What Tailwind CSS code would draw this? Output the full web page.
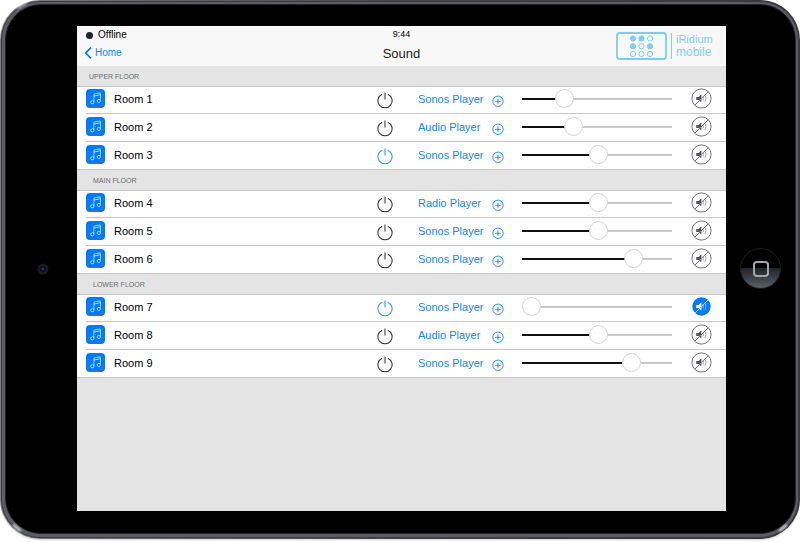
<!DOCTYPE html>
<html lang="en">
  <head>
    <meta charset="UTF-8" />
    <meta name="viewport" content="width=device-width, initial-scale=1.0" />
    <title>Sound</title>
    <script src="https://cdn.jsdelivr.net/npm/@tailwindcss/browser@4"></script>
  </head>
  <body
    class="min-h-screen flex flex-col bg-white pb-[3px] font-['Liberation_Sans',Arial,sans-serif] text-[11px] leading-4 text-black"
  >
    <!-- Tablet body -->
    <div
      class="relative flex-1 flex rounded-[40px] bg-linear-to-r from-[#7b7c81] via-[#48474c] to-[#38373b] p-px shadow-[0_1px_2px_#0003]"
    >
      <div
        class="flex-1 flex rounded-[39px] bg-[#5c5d62] border border-[#3a3a3f] pl-[3px] pr-0.5 pt-0.5 pb-[3px]"
      >
        <div
          class="flex-1 flex rounded-[36px] bg-black border border-[#222226] pt-[21px] pb-[22px]"
        >
          <!-- Camera -->
          <div class="w-[71px] flex items-center pl-[31px]">
            <svg class="size-[12px]" viewBox="0 0 12 12">
              <circle cx="6" cy="6" r="5.5" fill="#191b1e" />
              <circle cx="6" cy="6" r="3" fill="#0b0d1c" />
              <circle cx="6" cy="6" r="1.4" fill="#16307c" />
            </svg>
          </div>

          <main class="flex-1 flex flex-col bg-[#e4e4e4]">
            <header class="h-10 grid grid-cols-3 bg-[#f8f8f8]">
              <div class="pl-[9px] pt-px">
                <div class="h-4 flex items-center gap-[5px] text-[10px]">
                  <span class="size-[7px] rounded-full bg-[#1f2430]"></span>
                  Offline
                </div>
                <a
                  href="#"
                  class="h-5 -ml-0.5 flex items-center gap-[3px] text-[10px] text-[#1585fb]"
                >
                  <svg
                    class="w-2 h-3"
                    viewBox="0 0 8 12"
                    fill="none"
                    stroke="#007aff"
                    stroke-width="1.7"
                  >
                    <path d="M7 .7 1.7 6 7 11.3" />
                  </svg>
                  Home
                </a>
              </div>
              <div class="text-center">
                <div class="h-4 text-[9px]">9:44</div>
                <h1 class="text-[13px] leading-6 text-[#222]">Sound</h1>
              </div>
              <!-- Logo -->
              <div
                class="flex items-center justify-end gap-1 pr-2.5 text-[#7fcdee]"
              >
                <svg
                  class="w-[51px] h-7"
                  viewBox="0 0 51 28"
                  fill="none"
                  stroke="currentColor"
                >
                  <rect
                    x="1"
                    y="1"
                    width="49"
                    height="26"
                    rx="2.5"
                    stroke-width="1.8"
                  />
                  <g fill="currentColor">
                    <circle cx="17" cy="6.5" r="2.6" />
                    <circle cx="25.5" cy="6.5" r="2.6" />
                    <circle cx="17" cy="14.3" r="2.6" />
                    <circle cx="34" cy="14.3" r="2.6" />
                  </g>
                  <circle cx="34" cy="6.5" r="2.6" />
                  <circle cx="25.5" cy="14.3" r="2.6" />
                  <circle cx="17" cy="22" r="2.6" />
                  <circle cx="25.5" cy="22" r="2.6" />
                  <circle cx="34" cy="22" r="2.6" />
                </svg>
                <div
                  class="w-[45px] border-l border-current pl-1 leading-[13px]"
                >
                  <div class="text-[11px]">iRidium</div>
                  <div class="text-[12px]">mobile</div>
                </div>
              </div>
            </header>
            <div id="floors"></div>
          </main>

          <!-- Home button -->
          <div class="w-[69px] flex items-center pl-3.5">
            <button
              aria-label="Home button"
              class="size-[41px] flex items-center justify-center rounded-full border border-[#1c2022] bg-linear-to-b from-black from-50% via-[#20272b] via-50% to-[#596268]"
            >
              <span
                class="size-4 rounded-[4px] border-2 border-[#a3a7aa]"
              ></span>
            </button>
          </div>
        </div>
      </div>

      <!-- Light on the corners -->
      <span
        class="absolute top-1 left-4 w-3 h-0.5 rounded-full bg-white/80 blur-[1px] -rotate-30"
      ></span>
      <span
        class="absolute bottom-2.5 left-3 w-2.5 h-0.5 rounded-full bg-white/90 blur-[1px] rotate-40"
      ></span>
      <span
        class="absolute bottom-2.5 right-3 w-2.5 h-0.5 rounded-full bg-white/90 blur-[1px] -rotate-40"
      ></span>
    </div>

    <script>
      const floors = [
        {
          name: "Upper floor",
          rooms: [
            { name: "Room 1", player: "Sonos Player", volume: 25 },
            { name: "Room 2", player: "Audio Player", volume: 32 },
            { name: "Room 3", player: "Sonos Player", volume: 51, on: true },
          ],
        },
        {
          name: "Main floor",
          rooms: [
            { name: "Room 4", player: "Radio Player", volume: 51 },
            { name: "Room 5", player: "Sonos Player", volume: 51 },
            { name: "Room 6", player: "Sonos Player", volume: 78 },
          ],
        },
        {
          name: "Lower floor",
          rooms: [
            {
              name: "Room 7",
              player: "Sonos Player",
              volume: 0,
              on: true,
              muted: true,
            },
            { name: "Room 8", player: "Audio Player", volume: 51 },
            { name: "Room 9", player: "Sonos Player", volume: 76 },
          ],
        },
      ];

      const musicIcon = `
        <svg class="size-[19px]" viewBox="0 0 19 19" fill="none" stroke="#b5dcff" stroke-width=".9">
          <rect width="19" height="19" rx="4" fill="#007aff" stroke="none" />
          <path d="M7.9 13.2V5.2L14.4 3.9v7.9M7.9 7.1l6.5-1.3" />
          <circle cx="6.3" cy="13.3" r="1.6" />
          <circle cx="12.8" cy="11.9" r="1.6" />
        </svg>`;

      const powerIcon = `
        <svg class="w-4 h-[18px]" viewBox="0 0 16 18" fill="none" stroke="currentColor" stroke-width="1.1">
          <path d="M5.2 3.2a7.1 7.1 0 1 0 5.6 0M8 1.4v7" />
        </svg>`;

      const plusIcon = `
        <svg class="w-3 h-4" viewBox="0 0 12 16" fill="none" stroke="currentColor" stroke-width=".9">
          <circle cx="6" cy="10.3" r="5.2" />
          <path d="M6 7.5v5.6M3.2 10.3h5.6" />
        </svg>`;

      const muteIcon = `
        <svg class="size-[21px]" viewBox="0 0 21 21" fill="none" stroke="#77777c" stroke-width="1">
          <circle cx="10.5" cy="10.5" r="9.6" />
          <path d="M5.2 9h2.2l3-2.4v7.8l-3-2.4H5.2z" fill="#55555c" stroke="none" />
          <path d="M12 8.4q1.2 2.1 0 4.2M14 6.8q2 3.7 0 7.4" stroke="#a5a5aa" />
          <path d="M17.3 3.7 3.7 17.3" />
        </svg>`;

      const mutedIcon = `
        <svg class="size-[21px]" viewBox="0 0 21 21" fill="none" stroke="#b5dcff" stroke-width="1">
          <circle cx="10.5" cy="10.5" r="9.2" fill="#007aff" stroke="none" />
          <path d="M5.2 9h2.2l3-2.4v7.8l-3-2.4H5.2z" fill="#fff" stroke="none" />
          <path d="M12 8.4q1.2 2.1 0 4.2M14 6.8q2 3.7 0 7.4" stroke="#7dbbff" />
          <path d="M17 4 4 17" />
        </svg>`;

      // The thumb is 19px wide, its centre never reaches the track's ends
      function trackFill(volume) {
        const stop = `calc(9px + (100% - 19px) * ${volume / 100})`;
        return `background-image: linear-gradient(to right, ${
          volume > 0 ? "#111" : "#c8c8c8"
        } ${stop}, #c8c8c8 ${stop})`;
      }

      function roomRow(room) {
        return `
          <li class="group pl-[9px] last:pl-0 bg-white">
            <div class="h-7 flex items-center border-b border-[#c8c8c8] pr-3.5 pb-0.5 group-last:pl-[9px]">
              ${musicIcon}
              <span class="flex-1 pl-[9px]">${room.name}</span>
              <button aria-label="Power ${room.name}" aria-pressed="${!!room.on}" class="pt-0.5 ${
          room.on ? "text-[#3a97f8]" : "text-[#3c3c3c]"
        }">${powerIcon}</button>
              <button class="w-[86px] ml-[25px] flex items-center justify-between text-[#1585fb]">
                ${room.player}${plusIcon}
              </button>
              <input
                type="range"
                aria-label="Volume ${room.name}"
                value="${room.volume}"
                style="${trackFill(room.volume)}"
                class="w-[150px] h-[19px] ml-[18px] appearance-none bg-no-repeat bg-center bg-[length:100%_2px] [&::-webkit-slider-thumb]:appearance-none [&::-webkit-slider-thumb]:size-[19px] [&::-webkit-slider-thumb]:rounded-full [&::-webkit-slider-thumb]:bg-white [&::-webkit-slider-thumb]:border [&::-webkit-slider-thumb]:border-[#d4d4d4]"
              />
              <button aria-label="Mute ${room.name}" aria-pressed="${!!room.muted}" class="ml-[19px]">${
          room.muted ? mutedIcon : muteIcon
        }</button>
            </div>
          </li>`;
      }

      const list = document.getElementById("floors");
      list.innerHTML = floors
        .map(
          (floor) => `
          <section class="group/floor">
            <h2 class="h-[21px] -mb-px relative border-b border-[#c8c8c8] pl-4 group-first/floor:pl-3 text-[7px] leading-[22px] uppercase text-[#6d6d72]">${
              floor.name
            }</h2>
            <ul>${floor.rooms.map(roomRow).join("")}</ul>
          </section>`
        )
        .join("");

      list.addEventListener("input", (e) => {
        e.target.style = trackFill(e.target.value);
      });
    </script>
  </body>
</html>
